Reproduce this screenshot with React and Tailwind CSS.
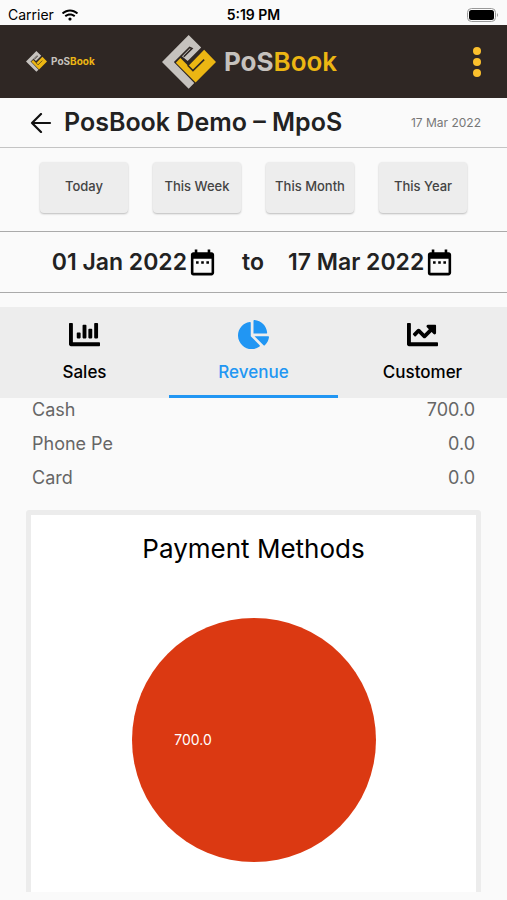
import { FaChartBar, FaChartLine, FaChartPie, FaWifi } from 'react-icons/fa';
import { MdDateRange } from 'react-icons/md';
import clsx from 'clsx';

const ranges = ['Today', 'This Week', 'This Month', 'This Year'];

const tabs = [
  { name: 'Sales', icon: FaChartBar },
  { name: 'Revenue', icon: FaChartPie, active: true },
  { name: 'Customer', icon: FaChartLine },
];

const payments = [
  { method: 'Cash', amount: '700.0' },
  { method: 'Phone Pe', amount: '0.0' },
  { method: 'Card', amount: '0.0' },
];

function LogoMark({ className }) {
  return (
    <svg viewBox="0 0 164 164" className={className} aria-hidden="true">
      {/* Silver half */}
      <path fill="#c6c2be" d="M81 0 L119 38 L78 79 L58 62 L38 84 L98 146 L81 163 L0 82 Z" />
      <path fill="none" stroke="#2f2724" strokeWidth="5" d="M38 84 L84 38 L91 41 L66 66" />
      {/* Gold half */}
      <path fill="#ecb613" d="M42 84 L56 70 L80 94 L128 45 L164 82 L102 144 Z" />
      <path fill="none" stroke="#2f2724" strokeWidth="5" d="M78 92 L94 108 L128 75" />
    </svg>
  );
}

function StatusBar() {
  return (
    <div className="grid grid-cols-3 items-center h-[25px] px-2 pt-1 text-sm text-black">
      <span className="flex items-center gap-2">
        Carrier
        <FaWifi className="size-4" />
      </span>
      <span className="text-center font-semibold">5:19 PM</span>
      <svg viewBox="0 0 32 14" className="w-8 h-3.5 justify-self-end" aria-hidden="true">
        <rect x="0.5" y="0.5" width="28" height="13" rx="4" fill="none" stroke="#999" />
        <rect x="2" y="2" width="25" height="10" rx="2.5" />
        <path d="M30 5 q2 2 0 4 z" fill="#999" />
      </svg>
    </div>
  );
}

function DateField({ value }) {
  return (
    <button type="button" className="flex items-center" aria-label={`Change date ${value}`}>
      {value}
      <MdDateRange className="size-[31px] text-black" />
    </button>
  );
}

export default function App() {
  return (
    <div className="min-h-screen bg-[#fafafa] pb-2 font-['Inter',sans-serif] text-[#222]">
      <StatusBar />

      {/* Brand bar */}
      <header className="grid grid-cols-[1fr_auto_1fr] items-center h-[73px] px-[26px] bg-[#2f2724] font-bold">
        <span className="flex items-center gap-1 text-[10px] text-[#c6c2be]">
          <LogoMark className="size-[21px]" />
          <span>PoS<span className="text-[#ecb613]">Book</span></span>
        </span>
        <span className="flex items-center gap-2 pr-2 text-[26px] text-[#c6c2be]">
          <LogoMark className="size-[54px]" />
          <span>PoS<span className="font-semibold text-[#ecb613]">Book</span></span>
        </span>
        <button type="button" aria-label="Menu" className="justify-self-end">
          <svg viewBox="0 0 8 30" className="w-2 h-[30px] fill-[#fbc02d]">
            <circle cx="4" cy="4" r="4" />
            <circle cx="4" cy="15" r="4" />
            <circle cx="4" cy="26" r="4" />
          </svg>
        </button>
      </header>

      {/* Title */}
      <div className="flex items-center h-[50px] pl-[30px] pr-[26px] border-b border-[#c4c4c4]">
        <button type="button" aria-label="Back">
          <svg
            viewBox="0 0 22 20"
            className="w-[22px] h-5"
            fill="none"
            stroke="#111"
            strokeWidth="2.2"
            strokeLinecap="round"
            strokeLinejoin="round"
          >
            <path d="M20 10 H2 M11 1 L2 10 L11 19" />
          </svg>
        </button>
        <h1 className="ml-3 text-[25px] font-semibold">PosBook Demo – MpoS</h1>
        <span className="ml-auto text-xs text-[#777]">17 Mar 2022</span>
      </div>

      {/* Quick ranges */}
      <div className="flex justify-between px-10 pt-3.5 pb-[18px] border-b border-[#aaa]">
        {ranges.map((range) => (
          <button
            key={range}
            type="button"
            className="w-[88px] h-[51px] pb-0.5 rounded bg-[#ededed] text-[13px] font-medium text-[#444] shadow-[0_1px_2px_#bbb]"
          >
            {range}
          </button>
        ))}
      </div>

      {/* Custom range */}
      <div className="flex items-center justify-center gap-6 h-[61px] border-b border-[#aaa] text-[23px] font-semibold">
        <DateField value="01 Jan 2022" />
        <span>to</span>
        <DateField value="17 Mar 2022" />
      </div>

      {/* Tabs */}
      <div role="tablist" className="grid grid-cols-3 mt-3.5 bg-[#ededed]">
        {tabs.map((tab) => (
          <button
            key={tab.name}
            type="button"
            role="tab"
            aria-selected={Boolean(tab.active)}
            className={clsx(
              'flex flex-col items-center gap-2.5 h-[91px] pt-3 border-b-3 text-[17px] font-medium',
              tab.active ? 'border-[#2196f3] text-[#2196f3]' : 'border-transparent text-black'
            )}
          >
            <tab.icon className="size-[31px]" />
            {tab.name}
          </button>
        ))}
      </div>

      {/* Amount per payment method */}
      <table className="w-full text-lg leading-6 text-[#666]">
        <tbody>
          {payments.map((row) => (
            <tr key={row.method}>
              <th scope="row" className="pl-8 pb-2.5 text-left font-normal">{row.method}</th>
              <td className="pr-8 pb-2.5 text-right">{row.amount}</td>
            </tr>
          ))}
        </tbody>
      </table>

      <section className="mt-2.5 mx-[26px] pb-[30px] border-5 border-b-0 border-[#ececec] rounded-t bg-white">
        <h2 className="pt-3.5 text-center text-[26px] text-black">Payment Methods</h2>
        <svg viewBox="0 0 244 244" className="block w-[244px] mx-auto mt-[50px]" role="img" aria-label="Payment methods chart">
          <circle cx="122" cy="122" r="122" fill="#db3912" />
          <text x="61" y="127" textAnchor="middle" fontSize="14" fill="#fff">700.0</text>
        </svg>
      </section>
    </div>
  );
}
